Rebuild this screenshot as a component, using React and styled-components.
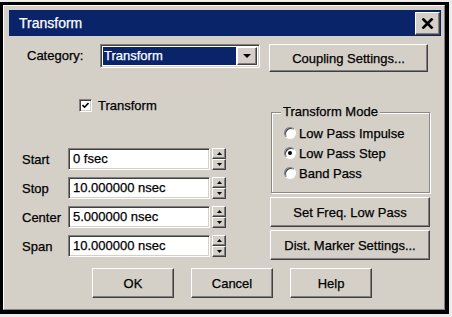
import React from 'react';
import styled, { createGlobalStyle } from 'styled-components';

const GlobalStyle = createGlobalStyle`
  html, body { margin: 0; padding: 0; background: #ececec; }
  body { font-family: "Liberation Sans", Arial, sans-serif; font-size: 13px; color: #000; -webkit-text-stroke: 0.25px currentColor; }
  * { box-sizing: border-box; }
`;

const Window = styled.div`
  margin-top: 2px;
  width: 449px;
  height: 312px;
  border-style: solid;
  border-color: #000;
  border-width: 3px 4px 4px 3px;
  background: #d4d0c8;
  display: flex;
`;

const Frame = styled.div`
  flex: 1;
  display: flex;
  flex-direction: column;
  border: 1px solid;
  border-color: #fff #808080 #808080 #fff;
  padding: 4px 3px 2px 5px;
`;

const TitleBar = styled.div`
  height: 26px;
  background: #0a246a;
  display: flex;
  align-items: center;
  justify-content: space-between;
  padding-left: 10px;
`;

const TitleText = styled.span`
  color: #fff;
  font-size: 14px;
`;

const raised = `
  background: #d4d0c8;
  border: 1px solid;
  border-color: #fff #404040 #404040 #fff;
  box-shadow: inset -1px -1px 0 #808080;
`;

const sunken = `
  border: 1px solid;
  border-color: #808080 #fff #fff #808080;
  box-shadow: inset 1px 1px 0 #404040, inset -1px -1px 0 #d4d0c8;
`;

const CloseButton = styled.div`
  ${raised}
  width: 25px;
  height: 23px;
  margin-right: 1px;
  display: flex;
  align-items: center;
  justify-content: center;
`;

const Panel = styled.div`
  flex: 1;
  display: flex;
  flex-direction: column;
`;

const TopRow = styled.div`
  margin-top: 8px;
  padding-left: 18px;
  display: flex;
  align-items: flex-start;
  height: 28px;
`;

const CategoryLabel = styled.span`
  width: 73px;
  line-height: 24px;
`;

const Combo = styled.div`
  ${sunken}
  width: 160px;
  height: 24px;
  background: #fff;
  display: flex;
  padding: 2px;
`;

const ComboValue = styled.div`
  flex: 1;
  background: #0a246a;
  color: #fff;
  line-height: 18px;
  padding-left: 1px;
  margin-right: 1px;
`;

const ComboArrow = styled.div`
  ${raised}
  width: 20px;
  display: flex;
  align-items: center;
  justify-content: center;
`;

const Button = styled.div`
  ${raised}
  width: ${p => p.$w || 82}px;
  height: ${p => p.$h || 30}px;
  margin-left: ${p => p.$ml || 0}px;
  margin-top: ${p => p.$mt || 0}px;
  display: flex;
  align-items: center;
  justify-content: center;
`;

const Middle = styled.div`
  display: flex;
  margin-top: 24px;
`;

const LeftCol = styled.div`
  width: 261px;
  padding-left: 13px;
  display: flex;
  flex-direction: column;
`;

const CheckRow = styled.div`
  height: 18px;
  display: flex;
  align-items: center;
  padding-left: 57px;
  gap: 6px;
`;

const CheckBox = styled.div`
  ${sunken}
  width: 13px;
  height: 13px;
  background: #fff;
  display: flex;
  align-items: center;
  justify-content: center;
`;

const Fields = styled.div`
  margin-top: 34px;
  display: flex;
  flex-direction: column;
  gap: 7px;
`;

const FieldRow = styled.div`
  display: flex;
  align-items: center;
  height: 22px;
`;

const FieldLabel = styled.span`
  width: 46px;
`;

const Input = styled.div`
  ${sunken}
  width: 142px;
  height: 22px;
  background: #fff;
  padding-left: 4px;
  line-height: 20px;
`;

const Spinner = styled.div`
  margin-left: 2px;
  width: 14px;
  height: 22px;
  display: flex;
  flex-direction: column;
`;

const SpinBtn = styled.div`
  ${raised}
  flex: 1;
  display: flex;
  align-items: center;
  justify-content: center;
`;

const RightCol = styled.div`
  width: 160px;
  display: flex;
  flex-direction: column;
`;

const Group = styled.div`
  position: relative;
  margin: 16px 0 0 1px;
  height: 81px;
  border: 1px solid #8c8a84;
  box-shadow: inset 1px 1px 0 #fff, 1px 1px 0 #fff;
  padding: 10px 0 0 12px;
  display: flex;
  flex-direction: column;
`;

const Legend = styled.span`
  position: absolute;
  top: -9px;
  left: 9px;
  padding: 0 2px;
  background: #d4d0c8;
`;

const RadioRow = styled.div`
  height: 20px;
  display: flex;
  align-items: center;
  gap: 3px;
`;

const Radio = styled.div`
  width: 12px;
  height: 12px;
  border-radius: 50%;
  background: #fff;
  border: 1px solid;
  border-color: #808080 #fff #fff #808080;
  box-shadow: inset 1px 1px 0 #404040;
  display: flex;
  align-items: center;
  justify-content: center;
`;

const Dot = styled.div`
  width: 4px;
  height: 4px;
  border-radius: 50%;
  background: #000;
`;

const BottomRow = styled.div`
  margin-top: 8px;
  padding-left: 83px;
  display: flex;
  gap: 17px;
`;

const Tri = ({ up, w = 5, h = 3 }) => (
  <svg width={w} height={h} viewBox={`0 0 ${w} ${h}`}>
    <polygon points={up ? `0,${h} ${w},${h} ${w / 2},0` : `0,0 ${w},0 ${w / 2},${h}`} fill="#000" />
  </svg>
);

const Field = ({ label, value }) => (
  <FieldRow>
    <FieldLabel>{label}</FieldLabel>
    <Input>{value}</Input>
    <Spinner>
      <SpinBtn><Tri up /></SpinBtn>
      <SpinBtn><Tri /></SpinBtn>
    </Spinner>
  </FieldRow>
);

const RadioItem = ({ label, checked }) => (
  <RadioRow>
    <Radio>{checked && <Dot />}</Radio>
    <span>{label}</span>
  </RadioRow>
);

export default function App() {
  return (
    <>
      <GlobalStyle />
      <Window>
        <Frame>
          <TitleBar>
            <TitleText>Transform</TitleText>
            <CloseButton>
              <svg width="13" height="11" viewBox="0 0 13 11">
                <path d="M1.5 0.5 L11.5 10.5 M11.5 0.5 L1.5 10.5" stroke="#000" strokeWidth="2.6" />
              </svg>
            </CloseButton>
          </TitleBar>
          <Panel>
            <TopRow>
              <CategoryLabel>Category:</CategoryLabel>
              <Combo>
                <ComboValue>Transform</ComboValue>
                <ComboArrow><Tri w={8} h={4} /></ComboArrow>
              </Combo>
              <Button $w={159} $h={28} $ml={9}>Coupling Settings...</Button>
            </TopRow>
            <Middle>
              <LeftCol>
                <CheckRow>
                  <CheckBox>
                    <svg width="7" height="7" viewBox="0 0 7 7">
                      <polyline points="0.5,3 2.5,5.2 6.5,1" fill="none" stroke="#000" strokeWidth="1.6" />
                    </svg>
                  </CheckBox>
                  <span>Transform</span>
                </CheckRow>
                <Fields>
                  <Field label="Start" value="0 fsec" />
                  <Field label="Stop" value="10.000000 nsec" />
                  <Field label="Center" value="5.000000 nsec" />
                  <Field label="Span" value="10.000000 nsec" />
                </Fields>
              </LeftCol>
              <RightCol>
                <Group>
                  <Legend>Transform Mode</Legend>
                  <RadioItem label="Low Pass Impulse" />
                  <RadioItem label="Low Pass Step" checked />
                  <RadioItem label="Band Pass" />
                </Group>
                <Button $w={160} $mt={4}>Set Freq. Low Pass</Button>
                <Button $w={160} $mt={3}>Dist. Marker Settings...</Button>
              </RightCol>
            </Middle>
            <BottomRow>
              <Button>OK</Button>
              <Button>Cancel</Button>
              <Button>Help</Button>
            </BottomRow>
          </Panel>
        </Frame>
      </Window>
    </>
  );
}
